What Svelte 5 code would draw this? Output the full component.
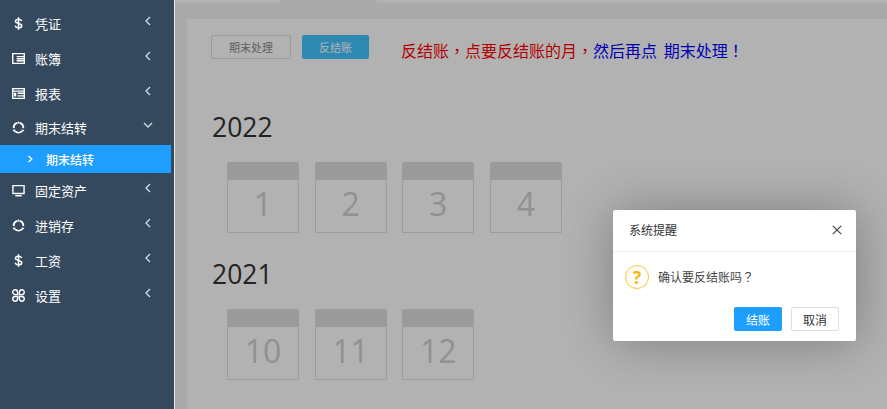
<script>
	const menu = [
		{ label: '凭证', icon: 'dollar' },
		{ label: '账簿', icon: 'book' },
		{ label: '报表', icon: 'report' },
		{ label: '期末结转', icon: 'cycle', open: true, children: ['期末结转'] },
		{ label: '固定资产', icon: 'monitor' },
		{ label: '进销存', icon: 'cycle' },
		{ label: '工资', icon: 'dollar' },
		{ label: '设置', icon: 'clover' },
	];
	const years = [
		{ year: 2022, months: [1, 2, 3, 4] },
		{ year: 2021, months: [10, 11, 12] },
	];
</script>

{#snippet icon(name)}
	<svg class="icon" viewBox="0 0 14 14" fill="none" stroke="currentColor" stroke-width="1.5">
		{#if name === 'dollar'}
			<path d="M10.4 4.4C10 2.9 8.6 2.3 7 2.3 5.2 2.3 3.7 3.1 3.7 4.7 3.7 7.8 10.5 6 10.5 9.4 10.5 11 8.9 11.7 7 11.7 5.2 11.7 3.9 11 3.4 9.5M7 .3v13.4" stroke-width="1.6" />
		{:else if name === 'book'}
			<path d="M.8 1.8h12.4v10.4H.8zM5 5h8M5 7.2h8M5 9.4h8" />
		{:else if name === 'report'}
			<path d="M.8 1.8h12.4v10.4H.8zM.8 4.4h12.4M6 6.8h7M6 9.6h7" />
			<path d="M2.2 6.2h2.4v4H2.2z" fill="currentColor" stroke="none" />
		{:else if name === 'cycle'}
			<path d="M5.4 1.9A5.4 5.4 0 0 0 1.9 7.6M8.6 1.9a5.4 5.4 0 0 1 3.5 5.7M3.2 11a5.4 5.4 0 0 0 7.6 0" stroke-width="2" />
			<path d="M7 .2 9 2.6H5zM.6 9.6l3.1-.6-1.2 3zM13.4 9.6l-3.1-.6 1.2 3z" fill="currentColor" stroke="none" />
		{:else if name === 'monitor'}
			<path d="M1 1.8h12v8.4H1zM3.6 12.6h6.8" />
		{:else if name === 'clover'}
			<path d="M6 6H3.4a2.6 2.6 0 1 1 2.6-2.6zM8 6V3.4a2.6 2.6 0 1 1 2.6 2.6zM6 8v2.6A2.6 2.6 0 1 1 3.4 8zM8 8h2.6A2.6 2.6 0 1 1 8 10.6z" />
		{/if}
	</svg>
{/snippet}

<div class="page">
	<aside class="sidebar">
		<ul class="menu">
			{#each menu as item}
				<li>
					<div class="menu-item" class:open={item.open}>
						<span class="menu-icon">{@render icon(item.icon)}</span>
						<span class="menu-label">{item.label}</span>
						<svg class="arrow" viewBox="0 0 10 10" fill="none" stroke="currentColor" stroke-width="1.3">
							<path d="M7 1 3 5l4 4" />
						</svg>
					</div>
					{#if item.children}
						{#each item.children as child}
							<div class="sub-item">
								<svg class="sub-arrow" viewBox="0 0 10 10" fill="none" stroke="currentColor" stroke-width="1.3">
									<path d="M3.5 2 6.8 5 3.5 8" />
								</svg>
								<span>{child}</span>
							</div>
						{/each}
					{/if}
				</li>
			{/each}
		</ul>
	</aside>

	<main class="main">
		<div class="tabs">
			<span class="tab-a"></span>
			<span class="tab-b"></span>
		</div>
		<div class="content">
			<div class="panel">
				<div class="toolbar">
					<button class="btn-outline">期末处理</button>
					<button class="btn-blue">反结账</button>
					<p class="notice">
						<span class="red">反结账<span class="punct">，</span>点要反结账的月<span class="punct">，</span></span><span class="blue">然后再点 期末处理<span class="punct">！</span></span>
					</p>
				</div>
				{#each years as group}
					<section class="year">
						<h2>{group.year}</h2>
						<div class="months">
							{#each group.months as month}
								<div class="month">
									<div class="month-top"></div>
									<div class="month-num">{month}</div>
								</div>
							{/each}
						</div>
					</section>
				{/each}
			</div>
		</div>
		<div class="mask"></div>
	</main>

	<div class="dialog">
		<header class="dialog-head">
			<span>系统提醒</span>
			<svg class="close" viewBox="0 0 10 10" stroke="currentColor" stroke-width="1.2">
				<path d="M.8.8l8.4 8.4M9.2.8.8 9.2" />
			</svg>
		</header>
		<div class="dialog-body">
			<span class="question">?</span>
			<span>确认要反结账吗<span class="punct">？</span></span>
		</div>
		<footer class="dialog-foot">
			<button class="confirm">结账</button>
			<button class="cancel">取消</button>
		</footer>
	</div>
</div>

<style>
	:global(body) {
		margin: 0;
		overflow: hidden;
	}
	.page {
		display: flex;
		position: relative;
		width: 887px;
		height: 409px;
		overflow: hidden;
		font-family: "Noto Sans CJK SC", "Noto Sans", sans-serif;
	}
	.punct {
		font-family: "Noto Sans CJK TC", sans-serif;
	}
	.sidebar {
		width: 171px;
		padding-right: 3px;
		flex-shrink: 0;
		background: #34495e;
		color: #fff;
	}
	.menu {
		list-style: none;
		margin: 0;
		padding: 6px 0 0;
	}
	.menu-item {
		display: flex;
		align-items: center;
		height: 35px;
		padding-left: 12px;
		font-size: 13px;
	}
	.menu-item.open {
		height: 33px;
		margin-bottom: 1px;
	}
	.menu-icon {
		display: flex;
		width: 23px;
	}
	.icon {
		width: 13px;
		height: 13px;
	}
	.menu-label {
		flex: 1;
	}
	.arrow {
		width: 10px;
		height: 10px;
		margin: -6px 18px 0 0;
		color: #d5dce3;
	}
	.open .arrow {
		transform: rotate(-90deg);
	}
	.sub-item {
		display: flex;
		align-items: center;
		height: 28px;
		padding-left: 25px;
		gap: 11px;
		background: #1e9fff;
		font-size: 12px;
		font-weight: 500;
	}
	.sub-arrow {
		width: 10px;
		height: 10px;
	}
	.main {
		position: relative;
		flex: 1;
		border-left: 1px solid #e8e8e8;
		background: #fff;
	}
	.tabs {
		display: flex;
		height: 3px;
		border-bottom: 3px solid #f4f4f4;
		box-shadow: 0 1px 0 #ddd;
	}
	.tab-a {
		width: 106px;
	}
	.tab-b {
		width: 96px;
		background: #f2f2f2;
	}
	.content {
		height: 403px;
		padding: 13px 0 0 12px;
		box-sizing: border-box;
		background: #f2f2f2;
	}
	.panel {
		height: 100%;
		padding: 16px 24px;
		box-sizing: border-box;
		background: #fff;
	}
	.toolbar {
		display: flex;
		align-items: flex-start;
		height: 70px;
	}
	.toolbar button {
		height: 24px;
		border-radius: 2px;
		font: 11px "Noto Sans CJK SC", sans-serif;
	}
	.btn-outline {
		width: 80px;
		border: 1px solid #dedede;
		background: #fff;
		color: #8c8c8c;
	}
	.btn-blue {
		width: 67px;
		margin-left: 11px;
		border: 0;
		background: #41c4ff;
		color: #fff;
	}
	.notice {
		margin: 3px 0 0 32px;
		font-size: 16px;
		word-spacing: 3px;
	}
	.red {
		color: #ff0000;
	}
	.blue {
		color: #0000ff;
	}
	.year {
		height: 147px;
	}
	h2 {
		margin: 0;
		padding: 6px 0 0 1px;
		height: 42px;
		font: 400 26.5px/32px "Open Sans", sans-serif;
		color: #333;
	}
	.months {
		display: flex;
		gap: 15.6px;
		margin: 9px 0 0 16px;
	}
	.month {
		width: 70px;
		height: 69px;
		border: 1px solid #e0e0e0;
		border-radius: 3px 3px 0 0;
		background: #fff;
		text-align: center;
	}
	.month-top {
		height: 18px;
		margin: -1px -1px 0;
		border-radius: 3px 3px 0 0;
		background: #dfdfdf;
	}
	.month-num {
		font: 32px/48px "Open Sans", sans-serif;
		color: #d0d0d0;
	}
	.mask {
		position: absolute;
		inset: 0;
		background: rgba(0, 0, 0, 0.3);
	}
	.dialog {
		position: absolute;
		left: 613px;
		top: 210px;
		width: 243px;
		height: 131px;
		border-radius: 2px;
		background: #fff;
		box-shadow: 1px 1px 50px rgba(0, 0, 0, 0.3);
		color: #333;
	}
	.dialog-head {
		display: flex;
		align-items: center;
		justify-content: space-between;
		height: 39px;
		padding: 0 14px 2px 16px;
		border-bottom: 1px solid #eee;
		font-size: 12px;
	}
	.close {
		width: 10px;
		height: 10px;
		color: #444;
	}
	.dialog-body {
		display: flex;
		align-items: center;
		gap: 9px;
		height: 49px;
		padding-left: 12px;
		font-size: 12px;
		color: #444;
	}
	.question {
		width: 22px;
		height: 22px;
		border: 1.5px solid #f5c934;
		border-radius: 50%;
		color: #f5b90f;
		font: 700 18px/22px "Open Sans", sans-serif;
		text-align: center;
	}
	.dialog-foot {
		display: flex;
		justify-content: flex-end;
		gap: 9px;
		padding: 6px 17px 0 0;
	}
	.dialog-foot button {
		width: 48px;
		height: 24px;
		border-radius: 2px;
		font: 12px "Noto Sans CJK SC", sans-serif;
	}
	.confirm {
		border: 0;
		background: #1e9fff;
		color: #fff;
	}
	.cancel {
		border: 1px solid #dedede;
		background: #fff;
		color: #333;
	}
</style>
